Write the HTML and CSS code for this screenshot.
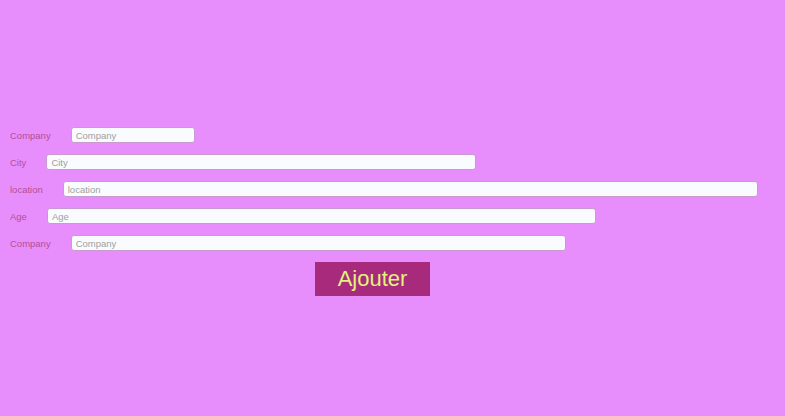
FILE: index.html
```html
<!DOCTYPE html>
<html lang="fr">
<head>
<meta charset="utf-8">
<title>Form</title>
<link rel="stylesheet" href="styles.css">
</head>
<body>
<form class="form">
  <div class="row"><label class="lbl">Company</label><input class="inp w1" placeholder="Company"></div>
  <div class="row"><label class="lbl">City</label><input class="inp w2" placeholder="City"></div>
  <div class="row"><label class="lbl">location</label><input class="inp w3" placeholder="location"></div>
  <div class="row"><label class="lbl">Age</label><input class="inp w4" placeholder="Age"></div>
  <div class="row"><label class="lbl">Company</label><input class="inp w5" placeholder="Company"></div>
  <div class="actions"><button type="button" class="btn">Ajouter</button></div>
</form>
</body>
</html>
```
FILE: styles.css
```css
html, body {
  margin: 0;
  padding: 0;
  background: #e88efc;
  height: 100%;
}
body {
  font-family: "Liberation Sans", Arial, sans-serif;
}
.form {
  padding: 127px 0 0 10px;
  display: flex;
  flex-direction: column;
  gap: 11px;
}
.row {
  display: flex;
  align-items: center;
  height: 16px;
}
.lbl {
  font-size: 9.5px;
  color: #b24f96;
  margin-right: 20px;
}
.inp {
  box-sizing: border-box;
  height: 16px;
  margin: 0;
  padding: 0 4px;
  border: 1px solid #c79bd2;
  border-radius: 3px;
  background: #f9fbfe;
  font-family: "Liberation Sans", Arial, sans-serif;
  font-size: 9.5px;
  color: #555;
  outline: none;
}
.inp::placeholder {
  color: #a0a0a0;
}
.w1 { width: 124px; }
.w2 { width: 430px; }
.w3 { width: 695px; }
.w4 { width: 549px; }
.w5 { width: 495px; }
.actions {
  display: flex;
  padding-left: 305px;
}
.btn {
  width: 115px;
  height: 34px;
  margin: 0;
  padding: 0;
  border: none;
  background: #a82a7c;
  color: #e2f27c;
  font-family: "Liberation Sans", Arial, sans-serif;
  font-size: 22px;
}
```
